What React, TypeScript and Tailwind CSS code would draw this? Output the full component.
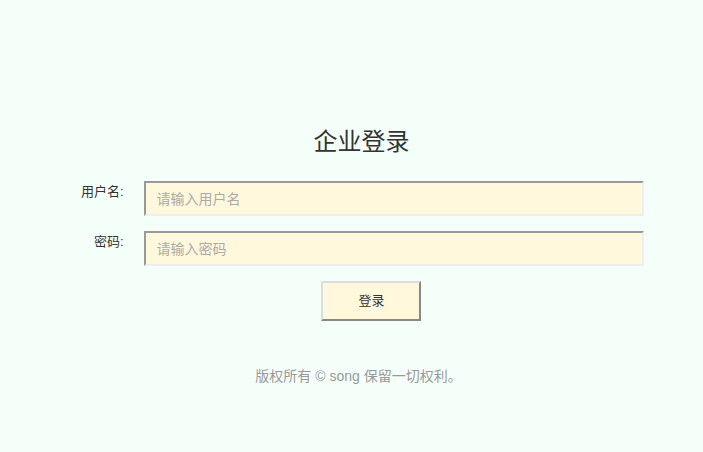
const font = { fontFamily: '"Liberation Sans", "Noto Sans CJK SC", sans-serif' };

function Field({ label, placeholder, type }: { label: string; placeholder: string; type: string }) {
  return (
    <div className="flex items-start">
      <label className="w-[44px] shrink-0 text-right text-[13px] leading-[20px] pt-[1px] text-[#333] whitespace-nowrap">{label}</label>
      <input
        type={type}
        placeholder={placeholder}
        className="ml-[20px] w-[500px] h-[35px] bg-[#fff8dc] border-2 border-solid border-t-[#999] border-l-[#999] border-b-[#eee] border-r-[#eee] pl-[11px] text-sm text-[#333] placeholder:text-[#aaa] outline-none"
      />
    </div>
  );
}

export default function App() {
  return (
    <div className="min-h-[452px] w-full bg-[#f5fffa] pl-5 flex justify-center" style={font}>
      <div className="w-[564px] pt-[126px] flex flex-col">
        <h1 className="text-center text-2xl leading-8 text-[#333]">企业登录</h1>
        <form className="mt-[23px] flex flex-col gap-[15px]">
          <Field label="用户名:" placeholder="请输入用户名" type="text" />
          <Field label="密码:" placeholder="请输入密码" type="password" />
          <button
            type="button"
            className="ml-[241px] w-[100px] h-[40px] bg-[#fff8dc] border-2 border-solid border-t-[#ddd] border-l-[#ddd] border-b-[#888] border-r-[#888] pl-[2px] text-[13px] text-[#333]"
          >
            登录
          </button>
        </form>
        <p className="mt-[45px] text-center text-sm text-[#999] pr-[6px]">版权所有 © song 保留一切权利。</p>
      </div>
    </div>
  );
}
